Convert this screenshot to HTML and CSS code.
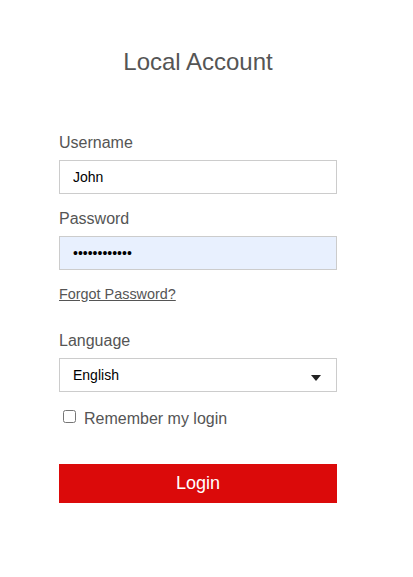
FILE: index.html
```html
<!DOCTYPE html>
<html lang="en">
<head>
<meta charset="utf-8">
<title>Local Account</title>
<link rel="stylesheet" href="styles.css">
</head>
<body>
<main class="login">
  <h1 class="title">Local Account</h1>
  <form class="form">
    <label class="label label-first" for="username">Username</label>
    <input class="field" id="username" type="text" value="John">
    <label class="label label-gap" for="password">Password</label>
    <input class="field field-autofill" id="password" type="password" value="abcdefghijkl">
    <a class="forgot" href="#">Forgot Password?</a>
    <label class="label label-lang" for="language">Language</label>
    <div class="select-wrap">
      <select class="field select" id="language">
        <option>English</option>
      </select>
    </div>
    <label class="remember">
      <input class="check" type="checkbox">
      <span>Remember my login</span>
    </label>
    <button class="btn" type="button">Login</button>
  </form>
</main>
</body>
</html>
```

FILE: styles.css
```css
* { box-sizing: border-box; }
html, body { margin: 0; padding: 0; background: #fff; }
body {
  font-family: "Liberation Sans", Arial, sans-serif;
  color: #555;
}
.login {
  width: 278px;
  margin-left: 59px;
  padding-top: 48px;
}
.title {
  margin: 0;
  font-size: 24px;
  line-height: 28px;
  font-weight: normal;
  text-align: center;
  color: #555;
}
.form {
  display: flex;
  flex-direction: column;
}
.label {
  display: block;
  font-size: 16px;
  line-height: 18px;
  color: #555;
}
.label-first { margin-top: 58px; }
.label-gap { margin-top: 16px; }
.label-lang { margin-top: 30px; }
.field {
  display: block;
  width: 278px;
  height: 34px;
  margin: 8px 0 0;
  padding: 0 13px;
  border: 1px solid #ccc;
  border-radius: 0;
  background: #fff;
  font-family: "Liberation Sans", Arial, sans-serif;
  font-size: 14px;
  color: #000;
  outline: none;
}
.field-autofill { background: #e8f0fe; }
.forgot {
  display: block;
  align-self: flex-start;
  margin-top: 16px;
  font-size: 14.4px;
  line-height: 16px;
  color: #555;
  text-decoration: underline;
}
.select-wrap {
  position: relative;
  margin-top: 8px;
}
.select {
  margin: 0;
  -webkit-appearance: none;
  appearance: none;
}
.select-wrap::after {
  content: "";
  position: absolute;
  right: 16px;
  top: 17px;
  width: 0;
  height: 0;
  border-left: 5.5px solid transparent;
  border-right: 5.5px solid transparent;
  border-top: 6px solid #222;
  pointer-events: none;
}
.remember {
  display: flex;
  align-items: flex-start;
  margin-top: 18px;
  font-size: 16px;
  line-height: 18px;
  color: #555;
}
.check {
  width: 13px;
  height: 13px;
  margin: 0 8px 0 4px;
}
.btn {
  display: block;
  width: 278px;
  height: 39px;
  margin-top: 36px;
  border: none;
  border-radius: 0;
  background: #db0a0a;
  color: #fff;
  font-family: "Liberation Sans", Arial, sans-serif;
  font-size: 18px;
  padding: 0;
}
```
